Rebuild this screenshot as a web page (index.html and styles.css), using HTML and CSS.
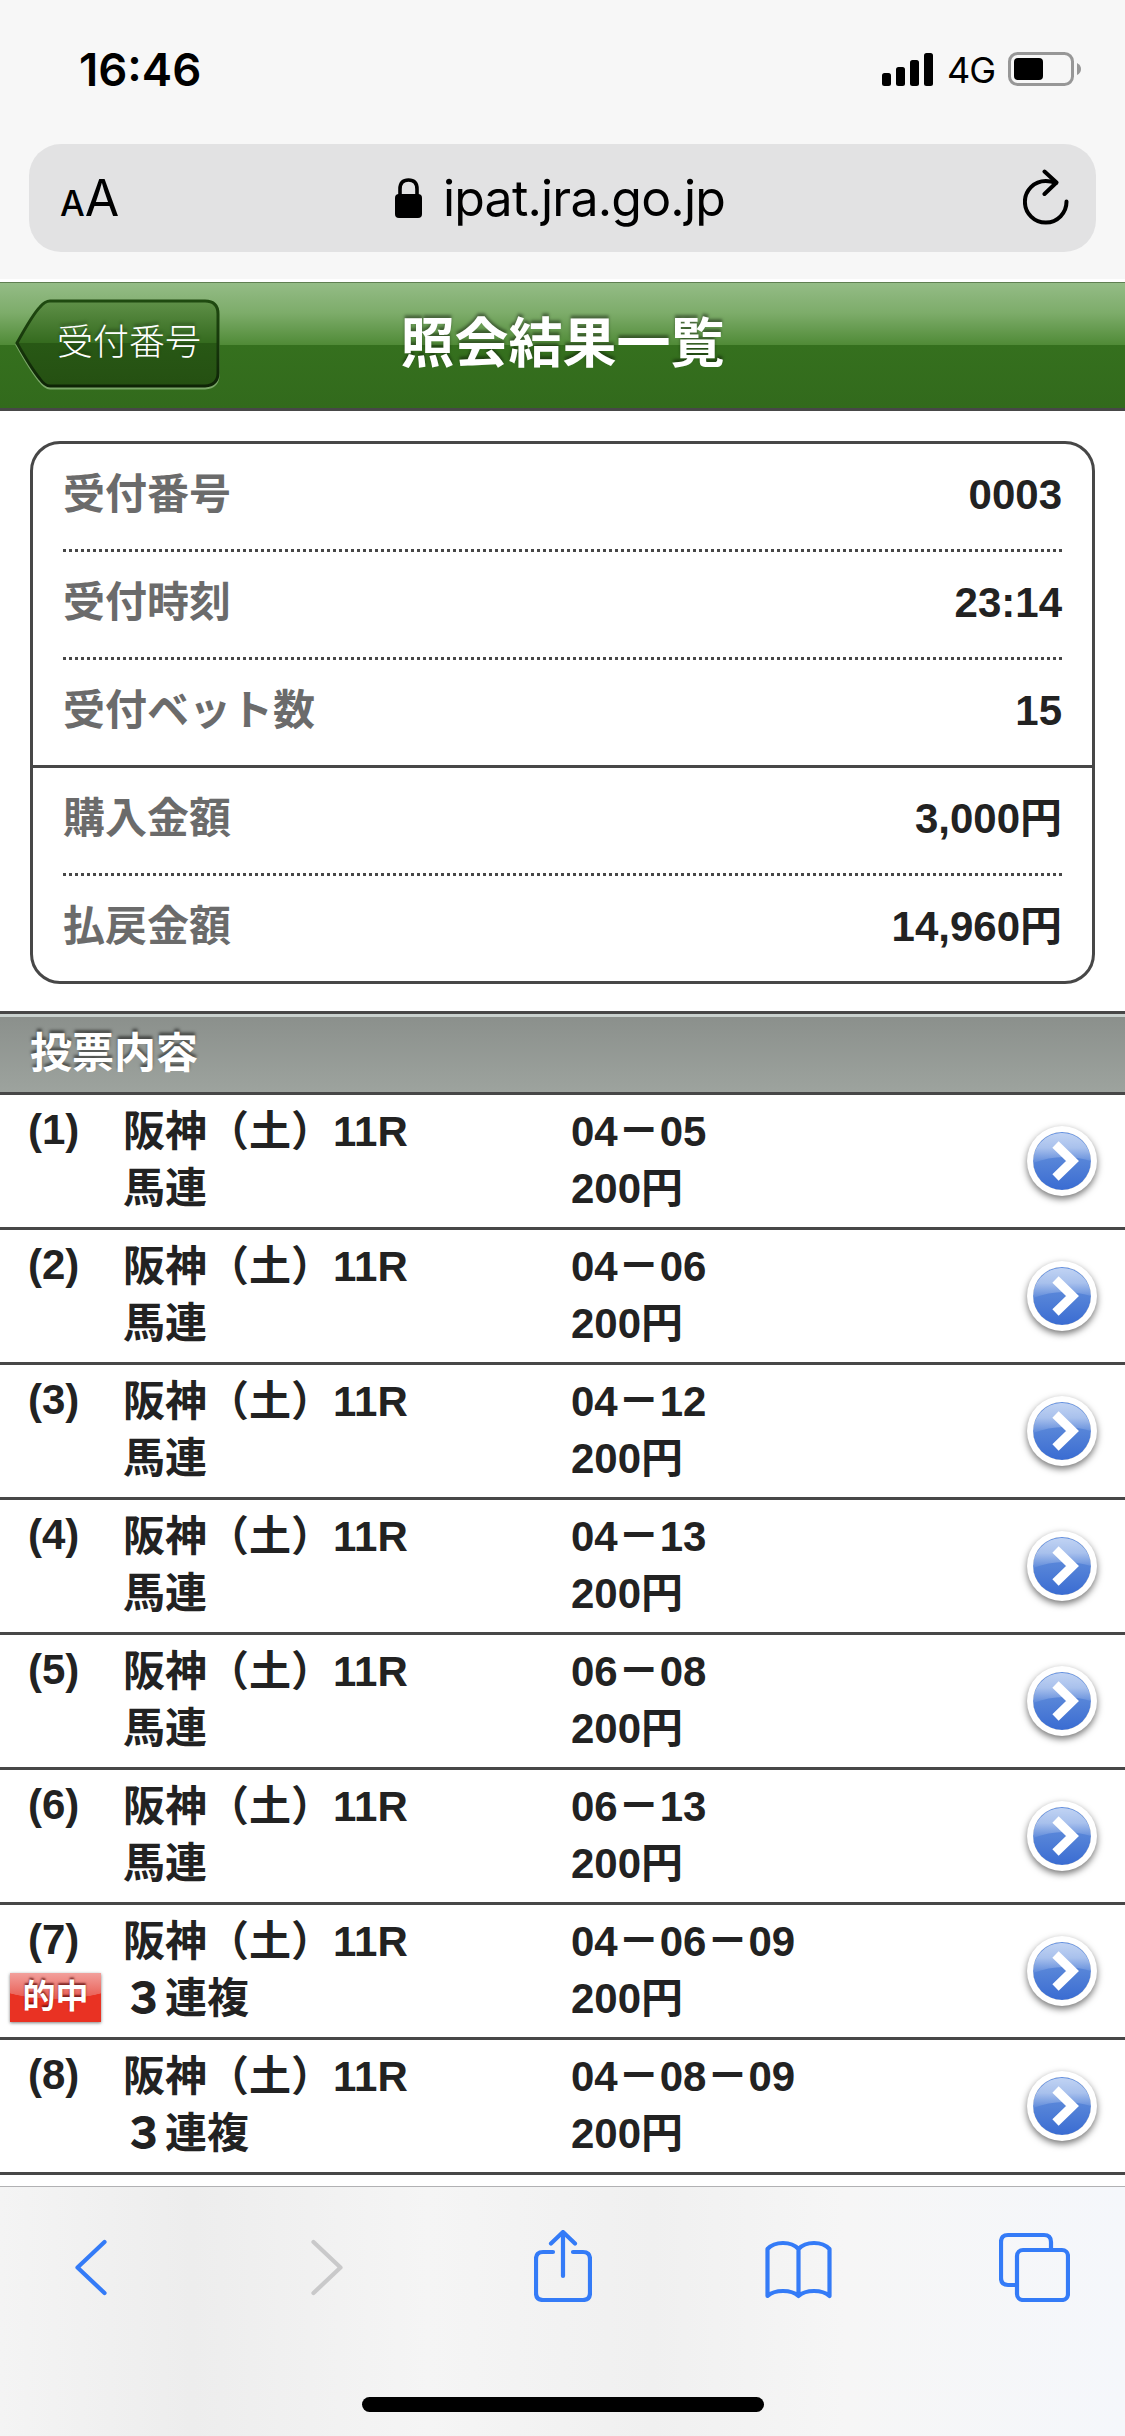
FILE: index.html
```html
<!DOCTYPE html>
<html lang="ja">
<head>
    <meta charset="UTF-8">
    <meta name="viewport" content="width=device-width, initial-scale=1.0">
    <title>照会結果一覧</title>
    <link rel="stylesheet" href="styles.css">
</head>
<body>
    <!-- shared icons -->
    <svg class="defs" width="0" height="0">
        <defs>
            <linearGradient id="blue" x1="0" y1="0" x2="0" y2="1">
                <stop offset="0" stop-color="#5b8be0"/>
                <stop offset="0.5" stop-color="#5684d8"/>
                <stop offset="1" stop-color="#3a6cd2"/>
            </linearGradient>
            <linearGradient id="gloss" x1="0" y1="0" x2="0" y2="1">
                <stop offset="0" stop-color="#fff" stop-opacity="0.62"/>
                <stop offset="0.5" stop-color="#fff" stop-opacity="0.48"/>
                <stop offset="1" stop-color="#fff" stop-opacity="0.05"/>
            </linearGradient>
            <symbol id="arrow" viewBox="0 0 58 58">
                <circle cx="29" cy="29" r="29" fill="url(#blue)"/>
                <path d="M0 31A29 29 0 0 1 58 29Q28 20 0 31Z" fill="url(#gloss)"/>
                <path d="M22.500 12.500L39.500 29L22.500 45.500" fill="none" stroke="#fff" stroke-width="9"/>
            </symbol>
        </defs>
    </svg>

    <div class="status">
        <span class="time">16:46</span>
        <svg class="signal" width="51" height="33" viewBox="0 0 51 33">
            <rect x="0" y="20" width="9" height="13" rx="2.500"/>
            <rect x="14" y="14" width="9" height="19" rx="2.500"/>
            <rect x="28" y="7" width="9" height="26" rx="2.500"/>
            <rect x="42" y="0" width="9" height="33" rx="2.500"/>
        </svg>
        <span class="net">4G</span>
        <svg class="battery" width="74" height="34" viewBox="0 0 74 34">
            <rect x="1.500" y="1.500" width="63" height="31" rx="8" fill="none" stroke="#979797" stroke-width="3"/>
            <rect x="6" y="6" width="29" height="22" rx="4"/>
            <path d="M69 11Q73 13 73 17T69 23Z" fill="#979797"/>
        </svg>
    </div>

    <div class="address">
        <div class="aa"><span class="small-a">A</span><span class="big-a">A</span></div>
        <div class="url">
            <svg width="27" height="40" viewBox="0 0 27 40">
                <path d="M5 18V11Q5 2 13.500 2T22 11V18" fill="none" stroke="#000" stroke-width="3.600"/>
                <rect x="0" y="16" width="27" height="24" rx="4"/>
            </svg>
            <span>ipat.jra.go.jp</span>
        </div>
        <svg class="reload" width="46" height="56" viewBox="0 0 46 56" fill="none" stroke="#000" stroke-width="4" stroke-linecap="round" stroke-linejoin="round">
            <path d="M43.500 32.500A20.800 20.800 0 1 1 22.700 12Q28 12 33 14"/>
            <path d="M21.500 2.500L33.500 13.500L21.500 25"/>
        </svg>
    </div>

    <div class="header">
        <a class="back">
            <svg width="206" height="92" viewBox="0 0 206 92">
                <defs>
                    <linearGradient id="back-fill" x1="0" y1="0" x2="0" y2="1">
                        <stop offset="0" stop-color="#5f9048"/>
                        <stop offset="0.5" stop-color="#346a1e"/>
                        <stop offset="0.5" stop-color="#285815"/>
                        <stop offset="1" stop-color="#255012"/>
                    </linearGradient>
                    <linearGradient id="back-line" x1="0" y1="0" x2="0" y2="1">
                        <stop offset="0" stop-color="#1f4a10"/>
                        <stop offset="1" stop-color="#0e2406"/>
                    </linearGradient>
                </defs>
                <path d="M35 4Q30 4 25 10Q18 17 2 46Q16 71 25 82Q30 89 35 89H190Q203 88 203 76V17Q203 4 190 4Z" fill="none" stroke="#7ba868" stroke-width="3"/>
                <path d="M35 2Q30 2 25 8Q18 15 2 44Q16 69 25 80Q30 87 35 87H190Q203 86 203 74V15Q203 2 190 2Z" fill="url(#back-fill)" stroke="url(#back-line)" stroke-width="3"/>
            </svg>
            <span>受付番号</span>
        </a>
        <h1>照会結果一覧</h1>
    </div>

    <div class="summary">
        <div class="group">
            <div class="row"><span class="label">受付番号</span><span>0003</span></div>
            <div class="row"><span class="label">受付時刻</span><span>23:14</span></div>
            <div class="row"><span class="label">受付ベット数</span><span>15</span></div>
        </div>
        <div class="group">
            <div class="row"><span class="label">購入金額</span><span>3,000円</span></div>
            <div class="row"><span class="label">払戻金額</span><span>14,960円</span></div>
        </div>
    </div>

    <h2>投票内容</h2>
    <ul class="bets">
        <li>
            <div class="no">(1)</div>
            <div class="race">阪神（土）11R<br>馬連</div>
            <div class="pick">04<b>－</b>05<br>200円</div>
            <svg class="more"><use href="#arrow"/></svg>
        </li>
        <li>
            <div class="no">(2)</div>
            <div class="race">阪神（土）11R<br>馬連</div>
            <div class="pick">04<b>－</b>06<br>200円</div>
            <svg class="more"><use href="#arrow"/></svg>
        </li>
        <li>
            <div class="no">(3)</div>
            <div class="race">阪神（土）11R<br>馬連</div>
            <div class="pick">04<b>－</b>12<br>200円</div>
            <svg class="more"><use href="#arrow"/></svg>
        </li>
        <li>
            <div class="no">(4)</div>
            <div class="race">阪神（土）11R<br>馬連</div>
            <div class="pick">04<b>－</b>13<br>200円</div>
            <svg class="more"><use href="#arrow"/></svg>
        </li>
        <li>
            <div class="no">(5)</div>
            <div class="race">阪神（土）11R<br>馬連</div>
            <div class="pick">06<b>－</b>08<br>200円</div>
            <svg class="more"><use href="#arrow"/></svg>
        </li>
        <li>
            <div class="no">(6)</div>
            <div class="race">阪神（土）11R<br>馬連</div>
            <div class="pick">06<b>－</b>13<br>200円</div>
            <svg class="more"><use href="#arrow"/></svg>
        </li>
        <li>
            <div class="no">(7)<span class="hit">的中</span></div>
            <div class="race">阪神（土）11R<br><b>３</b>連複</div>
            <div class="pick">04<b>－</b>06<b>－</b>09<br>200円</div>
            <svg class="more"><use href="#arrow"/></svg>
        </li>
        <li>
            <div class="no">(8)</div>
            <div class="race">阪神（土）11R<br><b>３</b>連複</div>
            <div class="pick">04<b>－</b>08<b>－</b>09<br>200円</div>
            <svg class="more"><use href="#arrow"/></svg>
        </li>
    </ul>

    <div class="toolbar">
        <div class="icons">
            <svg width="32" height="72" viewBox="0 0 32 72"><path d="M29.500 12L2.500 37.500L29.500 63"/></svg>
            <svg class="off" width="32" height="72" viewBox="0 0 32 72"><path d="M2.500 12L29.500 37.500L2.500 63"/></svg>
            <svg width="58" height="72" viewBox="0 0 58 72">
                <path d="M19 22H9Q2 22 2 29V63Q2 70 9 70H49Q56 70 56 63V29Q56 22 49 22H39"/>
                <path d="M29 46V3M17 13.500L29 2L41 13.500"/>
            </svg>
            <svg width="67" height="72" viewBox="0 0 67 72">
                <path d="M33.500 19Q28 13 18 13Q8 13 2.500 19V66Q8 61 18 61Q28 61 33.500 66Q39 61 49 61Q59 61 64.500 66V19Q59 13 49 13Q39 13 33.500 19V66"/>
            </svg>
            <svg width="71" height="72" viewBox="0 0 71 72">
                <path d="M52 19V12Q52 5 45 5H9Q2 5 2 12V48Q2 55 9 55H18"/>
                <rect x="18" y="20" width="51" height="50" rx="6"/>
            </svg>
        </div>
        <div class="home"></div>
    </div>
</body>
</html>
```

FILE: styles.css
```css
* {
    box-sizing: border-box;
}
body {
    margin: 0;
    width: 1125px;
    height: 2436px;
    overflow: hidden;
    display: flex;
    flex-direction: column;
    background: #fff;
    color: #222;
    font-family: "Liberation Sans", "Noto Sans CJK JP", sans-serif;
    font-size: 42px;
    font-weight: bold;
}
.defs {
    position: absolute;
}

/* status bar */
.status {
    display: flex;
    align-items: center;
    flex: none;
    height: 144px;
    padding: 0 43px 6px 79px;
    background: #f7f7f7;
    color: #000;
    font-family: Inter, sans-serif;
}
.time {
    margin-right: auto;
    font-size: 45.5px;
    font-weight: 600;
}
.net {
    margin: 2px 13px 0 14px;
    font-size: 36px;
    font-weight: 400;
    letter-spacing: -1px;
}

/* address bar */
.address {
    display: grid;
    grid-template-columns: 76px 1fr 46px;
    align-items: center;
    flex: none;
    height: 108px;
    padding: 0 27px 0 31px;
    border-radius: 32px;
    background: #e2e2e3;
    box-shadow: 0 0 0 400px #f7f7f7;
    clip-path: inset(0 -29px -27px);
    margin: 0 29px 30px;
    color: #000;
    font-family: Inter, sans-serif;
    font-weight: 400;
}
.aa {
    display: flex;
    align-items: baseline;
}
.small-a {
    font-size: 35px;
    font-weight: 500;
}
.big-a {
    font-size: 50px;
}
.url {
    display: flex;
    align-items: center;
    gap: 21px;
    margin-left: 259px;
    font-size: 50px;
    letter-spacing: -0.8px;
}
.reload {
    margin-bottom: 3px;
}

/* page header */
.header {
    position: relative;
    flex: none;
    height: 129px;
    border-top: 1px solid #5f7f51;
    border-bottom: 3px solid #474747;
    background: linear-gradient(#94bc86 0, #7dac6a 24%, #4f8a36 50%, #35701e 50%, #326a1c 100%);
}
.back {
    position: absolute;
    left: 15px;
    top: 16px;
    width: 206px;
    height: 92px;
    color: #fff;
    font-size: 36px;
    font-weight: 300;
    font-family: "Noto Sans CJK JP", sans-serif;
    text-shadow: 0 -3px 3px rgba(0, 0, 0, 0.3);
}
.back span {
    position: absolute;
    left: 42px;
    top: 13px;
    line-height: 54px;
    white-space: nowrap;
}
h1 {
    margin: 0;
    color: #fff;
    font-size: 54px;
    line-height: 122px;
    text-align: center;
    text-shadow: 0 -3px 3px rgba(0, 0, 0, 0.4);
}

/* summary box */
.summary {
    flex: none;
    margin: 30px 30px 27px;
    border: 3px solid #474747;
    border-radius: 30px;
}
.group + .group {
    border-top: 3px solid #474747;
}
.row {
    display: flex;
    justify-content: space-between;
    height: 105px;
    margin: 0 30px;
    line-height: 102px;
}
.row + .row {
    height: 108px;
    padding-top: 3px;
    background: repeating-linear-gradient(90deg, #474747 0 3px, transparent 3px 6px) top / 100% 3px no-repeat;
}
.label {
    color: #6b6b6b;
}

/* bet list */
h2 {
    flex: none;
    height: 84px;
    margin: 0;
    padding-left: 30px;
    border-top: 3px solid #474747;
    border-bottom: 3px solid #474747;
    background: linear-gradient(#c9d1ce 0 3px, #8b908c 3px, #9da39e);
    color: #fff;
    font-size: 42px;
    line-height: 79px;
    text-shadow: 0 -3px 3px rgba(0, 0, 0, 0.5);
}
.bets {
    flex: none;
    height: 1091px;
    margin: 0;
    padding: 0;
    list-style: none;
}
.bets li {
    display: grid;
    grid-template-columns: 113px 448px 1fr 58px;
    height: 135px;
    padding: 8px 34px 0 10px;
    border-bottom: 3px solid #474747;
    line-height: 57px;
}
.bets b {
    font-weight: 900;
}
.no {
    margin-top: -2px;
    padding-left: 18px;
}
.hit {
    display: block;
    width: 91px;
    height: 49px;
    margin: 5px 0 0 -18px;
    background: radial-gradient(ellipse 75px 26px at 50% 0, rgba(255, 255, 255, 0) 98%, #e93223 100%), linear-gradient(#f2a09c, #e95a50 26px, #e93223 26px);
    box-shadow: 0 1px 3px rgba(0, 0, 0, 0.5);
    color: #fff;
    font-size: 33px;
    line-height: 48px;
    text-align: center;
    text-shadow: 0 -2px 2px rgba(80, 0, 0, 0.7);
}
.more {
    width: 58px;
    height: 58px;
    margin-top: 29px;
    border-radius: 50%;
    box-shadow: 0 0 0 6px #fff, 0 3px 7px 6px rgba(0, 0, 0, 0.55);
}

/* browser toolbar */
.toolbar {
    display: flex;
    flex-direction: column;
    align-items: center;
    flex: none;
    height: 250px;
    border-top: 1px solid #b1b1b3;
    background: linear-gradient(90deg, #f4f4f4, #ededed 17%, #f5f5f5 38%, #f0f0f0 58%, #f6f6f6 75%, #f5f7fb 100%);
}
.icons {
    display: grid;
    grid-template-columns: repeat(5, 236px);
    justify-items: center;
    padding-top: 43px;
    fill: none;
    stroke: #347bf7;
    stroke-width: 4.2;
    stroke-linecap: round;
    stroke-linejoin: round;
}
.off {
    stroke: #c9c9ca;
}
.home {
    width: 402px;
    height: 15px;
    margin-top: 95px;
    border-radius: 8px;
    background: #000;
}
```
